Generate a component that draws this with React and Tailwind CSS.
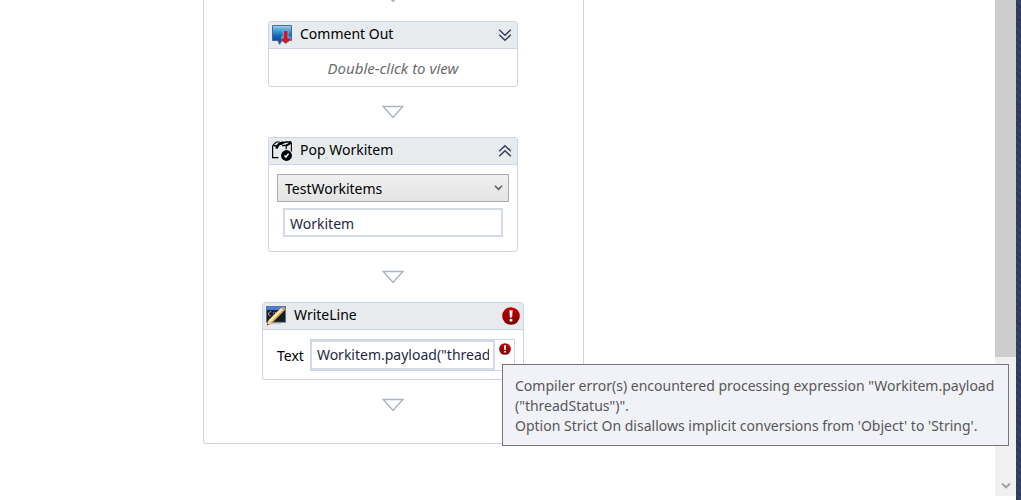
import { useState } from 'react';

function FlowArrow() {
  return (
    <svg viewBox="0 0 22 14" className="w-[22px] h-[14px] shrink-0" fill="#fff" stroke="#aab6c6" strokeWidth="1.5">
      <path d="M1.2 1.5h19.6L11 12.4z" />
    </svg>
  );
}

function DoubleChevron({ up }) {
  return (
    <svg viewBox="0 0 14 14" className="w-[14px] h-[14px]" fill="none" stroke="#333f55" strokeWidth="1.4">
      {up ? <path d="M1.2 7.3L7 1.7l5.8 5.6M1.2 12.3L7 6.7l5.8 5.6" /> : <path d="M1.2 1.7L7 7.3l5.8-5.6M1.2 6.7L7 12.3l5.8-5.6" />}
    </svg>
  );
}

function CommentIcon() {
  return (
    <svg viewBox="0 0 20 20" className="w-5 h-5 shrink-0">
      <defs>
        <linearGradient id="bubble" x1="0" y1="0" x2="0" y2="1">
          <stop offset="0" stopColor="#a9d3e6" />
          <stop offset="0.25" stopColor="#4aa3cf" />
          <stop offset="0.55" stopColor="#1266b4" />
          <stop offset="1" stopColor="#0b3f97" />
        </linearGradient>
      </defs>
      <path d="M0.5 0.5h19v15H10L7.5 19.3 6 15.5H0.5z" fill="url(#bubble)" stroke="#3a5f9c" strokeWidth="0.9" />
      <path d="M10.6 5.4h6v6.2h2.2v3.8l-5.2 4-4.6-4v-3.8h1.6z" fill="#a9b9dd" opacity="0.7" />
      <path d="M11.8 6h3.7v7.5h2.8v1.8l-4.7 3.3-4.4-3.3v-1.8h2.6z" fill="#cb1a25" />
    </svg>
  );
}

function WorkitemIcon() {
  return (
    <svg viewBox="0 0 20 20" className="w-5 h-5 shrink-0" fill="none" stroke="#000" strokeWidth="1.2">
      <path d="M0.6 4.6v12h5.8M19.4 1.4v9" />
      <path d="M0.6 4.6L4.4 1h3.4" />
      <path d="M1.4 4.8h3.4M10 4.6h3.6l1.6-.8" strokeWidth="1.5" />
      <path d="M4.6 7.6C5.2 4.4 7.6 2 11.5 1.5" strokeWidth="2.4" />
      <path d="M8.4 3.6C10 2 12 1.2 14.5 1h4.8" strokeWidth="1.5" />
      <path d="M14.4 4.8l4.8-3.4" strokeWidth="2" />
      <path d="M14.2 5v3.2" />
      <circle cx="14.5" cy="14.5" r="5.4" fill="#000" stroke="none" />
      <path d="M12.4 14.5l1.5 1.5 2.7-3.4" stroke="#fff" strokeWidth="1.5" />
    </svg>
  );
}

function WriteLineIcon() {
  return (
    <svg viewBox="0 0 20 20" className="w-5 h-5 shrink-0">
      <rect x="0.4" y="0.4" width="19.2" height="15.8" fill="#171b24" stroke="#687080" strokeWidth="0.8" />
      <path d="M0.5 0.5h19v3.6H0.5z" fill="#4b7fd6" />
      <path d="M5.4 5.8c-3-1.1-4.2 4.4-.8 3.9M7.4 6.4v1M7.4 8.6v1M9 5.8l1.6 4" fill="none" stroke="#aeb5c0" strokeWidth="1" />
      <path d="M2.5 17.6h13" stroke="#c6c9cf" strokeWidth="1.2" />
      <path d="M1 19.2l1.6-5L15.4 1.6l3 3L5.6 17.4z" fill="#dfb552" stroke="#81653a" strokeWidth="0.5" />
      <path d="M2.8 14.2L15.2 2l1.6 1.6L4.5 16z" fill="#fbeab0" />
      <path d="M1 19.2l1.6-5 3 3.2z" fill="#eed8b4" />
      <path d="M1 19.2l.6-1.9 1.3 1.3z" fill="#333" />
      <path d="M15.4 1.6L17 .4l2.7 2.5-1.3 1.7z" fill="#d897aa" />
    </svg>
  );
}

function ErrorIcon({ className }) {
  return (
    <svg viewBox="0 0 18 18" className={className} role="img" aria-label="Error">
      <defs>
        <linearGradient id="danger" x1="0" y1="0" x2="0" y2="1">
          <stop offset="0" stopColor="#c40000" />
          <stop offset="1" stopColor="#7c0004" />
        </linearGradient>
      </defs>
      <circle cx="9" cy="9" r="8.8" fill="url(#danger)" />
      <path d="M7.4 3.3h3.2l-.5 7.2H7.9zM7.7 11.9h2.6v2.5H7.7z" fill="#fff" />
    </svg>
  );
}

function Chevron({ className }) {
  return (
    <svg viewBox="0 0 10 8" className={className} fill="none" stroke="currentColor" strokeWidth="1.8">
      <path d="M1 1.5l4 4 4-4" />
    </svg>
  );
}

function Activity({ icon, title, action, className, children }) {
  return (
    <section className={`rounded-[3px] border border-[#cdd5e3] bg-white ${className}`}>
      <header className="flex h-[27px] items-center gap-2 border-b border-[#cdd5e3] bg-[#e7ebee] px-[3px]">
        {icon}
        <h2 className="flex-1 pb-[2px] leading-5">{title}</h2>
        {action}
      </header>
      {children}
    </section>
  );
}

export default function App() {
  const [queue, setQueue] = useState('TestWorkitems');
  const [variable, setVariable] = useState('Workitem');
  const [text, setText] = useState('Workitem.payload("threadStatus")');
  const [popOpen, setPopOpen] = useState(true);

  return (
    <div className="flex h-screen overflow-hidden bg-white font-['Noto_Sans',sans-serif] text-[14px] text-black">
      <main className="min-w-0 flex-1 pl-[203px]">
        <div className="flex w-[381px] flex-col items-center rounded-b-[3px] border border-t-0 border-[#cdd5e3] pr-px pb-[31px]">
          <div className="-mt-[11px] mb-[18px]">
            <FlowArrow />
          </div>

          <Activity
            className="w-[250px]"
            icon={<CommentIcon />}
            title="Comment Out"
            action={
              <button type="button" aria-label="Expand" className="pr-[2px]">
                <DoubleChevron />
              </button>
            }
          >
            <p className="pt-[9px] pb-[7px] text-center text-[15px] leading-[21px] text-[#6d6d6d] italic">Double-click to view</p>
          </Activity>

          <div className="py-[18px]">
            <FlowArrow />
          </div>

          <Activity
            className="w-[250px]"
            icon={<WorkitemIcon />}
            title="Pop Workitem"
            action={
              <button type="button" aria-label="Collapse" className="pr-[2px]" onClick={() => setPopOpen(!popOpen)}>
                <DoubleChevron up={popOpen} />
              </button>
            }
          >
            {popOpen && (
              <div className="px-2 pt-[9px] pb-[14px]">
                <div className="relative">
                  <select
                    aria-label="Queue"
                    value={queue}
                    onChange={(e) => setQueue(e.target.value)}
                    className="block h-7 w-full appearance-none border border-[#acacac] bg-linear-to-b from-[#f0f0f0] to-[#e4e4e4] px-[7px]"
                  >
                    <option>TestWorkitems</option>
                  </select>
                  <Chevron className="pointer-events-none absolute top-[10px] right-[6px] h-2 w-[9px] text-[#606060]" />
                </div>
                <div className="mx-[6px] mt-[6px]">
                  <input
                    type="text"
                    aria-label="Workitem variable"
                    value={variable}
                    onChange={(e) => setVariable(e.target.value)}
                    className="block h-[29px] w-full border-2 border-[#d5dae7] bg-white px-[5px] pt-[2px] text-[#1e2a45]"
                  />
                </div>
              </div>
            )}
          </Activity>

          <div className="py-[18px]">
            <FlowArrow />
          </div>

          <Activity
            className="relative w-[262px]"
            icon={<WriteLineIcon />}
            title="WriteLine"
            action={<ErrorIcon className="h-[18px] w-[18px]" />}
          >
            <div className="flex items-center pt-[9px] pr-2 pb-2 pl-[14px]">
              <label htmlFor="writeline-text" className="mr-[6px]">
                Text
              </label>
              <div className="flex h-8 min-w-0 flex-1 items-start border border-[#cdd5e3]">
                <div className="h-[30px] min-w-0 flex-1 border-2 border-l border-[#d5dae7] pr-1 pl-[5px]">
                  <input
                    id="writeline-text"
                    type="text"
                    value={text}
                    onChange={(e) => setText(e.target.value)}
                    aria-describedby="writeline-error"
                    className="block h-[25px] w-full text-[#1e2a45]"
                  />
                </div>
                <ErrorIcon className="mt-[3px] mr-[3px] ml-1 h-3 w-3 shrink-0" />
              </div>
            </div>

            {/* Compiler error tooltip */}
            <div
              id="writeline-error"
              role="tooltip"
              className="absolute top-[61px] left-[239px] z-10 w-[507px] border border-[#767676] bg-[#f1f2f7] px-3 pt-[11px] pb-[9px] leading-5 text-[#575757]"
            >
              <p>
                Compiler error(s) encountered processing expression "Workitem.payload
                <br />
                ("threadStatus")".
              </p>
              <p>Option Strict On disallows implicit conversions from 'Object' to 'String'.</p>
            </div>
          </Activity>

          <div className="pt-[18px]">
            <FlowArrow />
          </div>
        </div>
      </main>

      {/* Scrollbar */}
      <div className="mb-1 flex w-[21px] flex-col bg-[#f0f0f0]">
        <div className="h-[357px] bg-[#cdcdcd]" />
        <button type="button" aria-label="Scroll down" className="mt-auto flex h-5 items-center justify-center text-[#a0a0a0]">
          <Chevron className="h-2 w-[10px]" />
        </button>
      </div>
      <div className="w-[5px] bg-[repeating-linear-gradient(45deg,#2b3c5b_0px,#2b3c5b_3px,#324564_3px,#324564_5px)]" />
    </div>
  );
}
